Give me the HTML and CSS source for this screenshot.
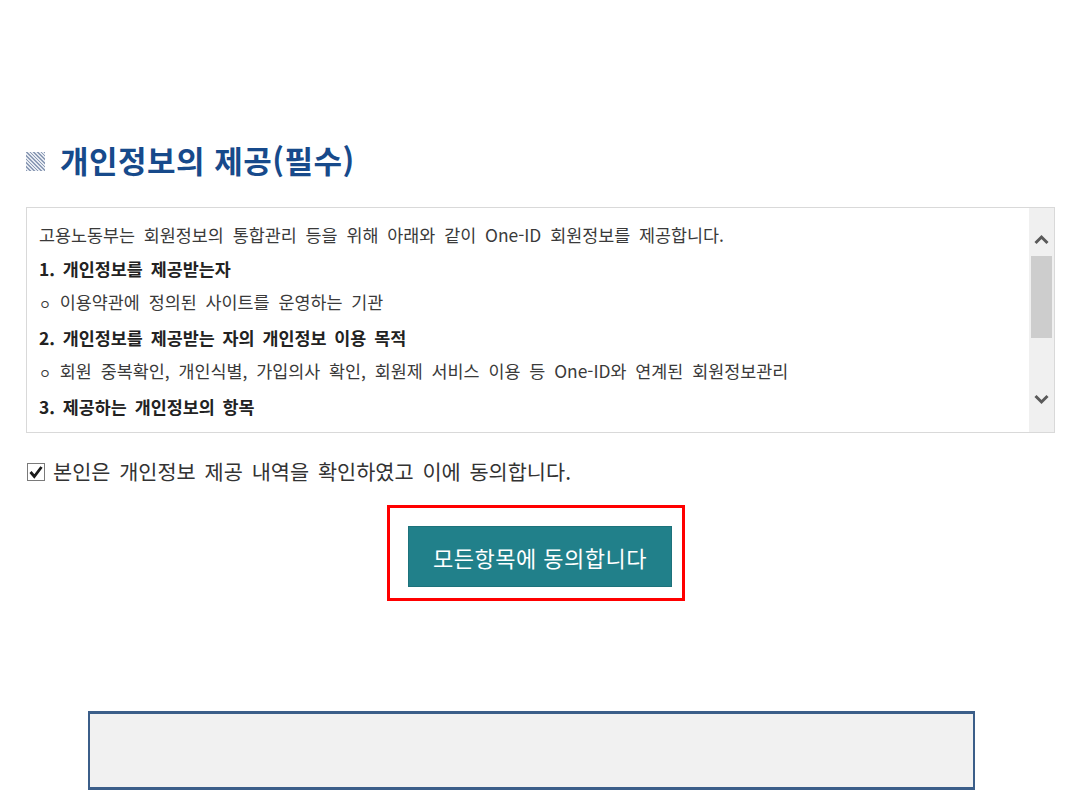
FILE: index.html
```html
<!DOCTYPE html>
<html lang="ko">
<head>
<meta charset="utf-8">
<title>개인정보의 제공(필수)</title>
<link rel="stylesheet" href="styles.css">
</head>
<body>
<main class="page">
  <h2 class="title"><span class="title-icon"></span>개인정보의 제공(필수)</h2>
  <div class="terms">
    <div class="terms-body">
      <p>고용노동부는 회원정보의 통합관리 등을 위해 아래와 같이 One-ID 회원정보를 제공합니다.</p>
      <p class="strong">1. 개인정보를 제공받는자</p>
      <p><span class="bullet">ㅇ</span> 이용약관에 정의된 사이트를 운영하는 기관</p>
      <p class="strong">2. 개인정보를 제공받는 자의 개인정보 이용 목적</p>
      <p><span class="bullet">ㅇ</span> 회원 중복확인, 개인식별, 가입의사 확인, 회원제 서비스 이용 등 One-ID와 연계된 회원정보관리</p>
      <p class="strong">3. 제공하는 개인정보의 항목</p>
      <p><span class="bullet">ㅇ</span> 아이디, 성명, 생년월일, 성별, 휴대전화번호, 이메일</p>
    </div>
    <div class="scrollbar">
      <svg class="arrow arrow-up" width="25" height="22" viewBox="0 0 25 22"><path d="M6.5 15 L12.5 9 L18.5 15" fill="none" stroke="#5a5a5a" stroke-width="3"/></svg>
      <div class="track"><div class="thumb"></div></div>
      <svg class="arrow arrow-down" width="25" height="22" viewBox="0 0 25 22"><path d="M6.5 8 L12.5 14 L18.5 8" fill="none" stroke="#5a5a5a" stroke-width="3"/></svg>
    </div>
  </div>
  <label class="agree">
    <span class="check"><svg width="18" height="18" viewBox="0 0 18 18"><rect x="0.5" y="0.5" width="17" height="17" fill="#fff" stroke="#7a7a7a"/><path d="M3.5 9 L7.3 13.5 L14.5 4" fill="none" stroke="#1a1a1a" stroke-width="2.8"/></svg></span>
    본인은 개인정보 제공 내역을 확인하였고 이에 동의합니다.
  </label>
  <div class="btn-row">
    <div class="btn-holder">
      <button class="btn-all" type="button">모든항목에 동의합니다</button>
      <span class="highlight"></span>
    </div>
  </div>
  <div class="bottom-box"></div>
</main>
</body>
</html>
```
FILE: styles.css
```css
* { box-sizing: border-box; }
html, body { margin: 0; padding: 0; background: #fff; }
body {
  font-family: "Noto Sans CJK KR", "Noto Sans", sans-serif;
  color: #333;
}
.page {
  width: 1080px;
  padding: 142px 0 0 26px;
}
.title {
  margin: 0;
  display: flex;
  align-items: center;
  height: 36px;
  font-size: 31px;
  line-height: 36px;
  font-weight: 700;
  color: #174a8b;
  letter-spacing: 0.5px;
}
.title-icon {
  width: 19px;
  height: 19px;
  margin: 3px 15px 0 0;
  background: repeating-linear-gradient(45deg, #8d9cb6 0 1.2px, #e6eaf1 1.2px 2.6px);
}
.terms {
  margin-top: 29px;
  width: 1029px;
  height: 226px;
  border: 1px solid #d9d9d9;
  display: flex;
}
.terms-body {
  flex: 1;
  overflow: hidden;
  padding: 10px 12px 0 12px;
  font-size: 17.4px;
  line-height: 33.6px;
  color: #3a3a3a;
  word-spacing: 4px;
}
.terms-body p { margin: 0; white-space: nowrap; }
.terms-body .strong { font-weight: 700; color: #222; word-spacing: 3px; }
.bullet { font-size: 13px; }
.scrollbar {
  width: 25px;
  background: #f0f0f0;
  display: flex;
  flex-direction: column;
}
.arrow { display: block; flex: none; }
.arrow-up { margin-top: 20px; }
.arrow-down { margin-bottom: 22px; }
.track { flex: 1; padding: 0 2px; }
.thumb { margin-top: 6px; height: 82px; background: #cdcdcd; }
.agree {
  display: flex;
  align-items: center;
  margin-top: 24px;
  height: 28px;
  font-size: 20.8px;
  color: #333;
  word-spacing: 3px;
}
.check { display: flex; margin: 1px 8px 0 1px; }
.btn-row {
  display: flex;
  justify-content: center;
  margin-top: 41px;
  padding-right: 26px;
}
.btn-holder { position: relative; }
.btn-all {
  display: block;
  width: 264px;
  height: 61px;
  background: #21808a;
  border: 1px solid #1d727b;
  color: #fff;
  font-family: "Noto Sans CJK KR", "Noto Sans", sans-serif;
  font-size: 22px;
  letter-spacing: 0.5px;
  font-weight: 400;
  padding: 0;
}
.highlight {
  position: absolute;
  left: -21px;
  top: -21px;
  right: -13px;
  bottom: -14px;
  border: 3px solid #ff0000;
  pointer-events: none;
}
.bottom-box {
  margin: 124px 0 0 62px;
  width: 887px;
  height: 79px;
  background: #f1f1f1;
  border: 3px solid #3b5e89;
  border-left-width: 2px;
  border-right-width: 2px;
}
```
